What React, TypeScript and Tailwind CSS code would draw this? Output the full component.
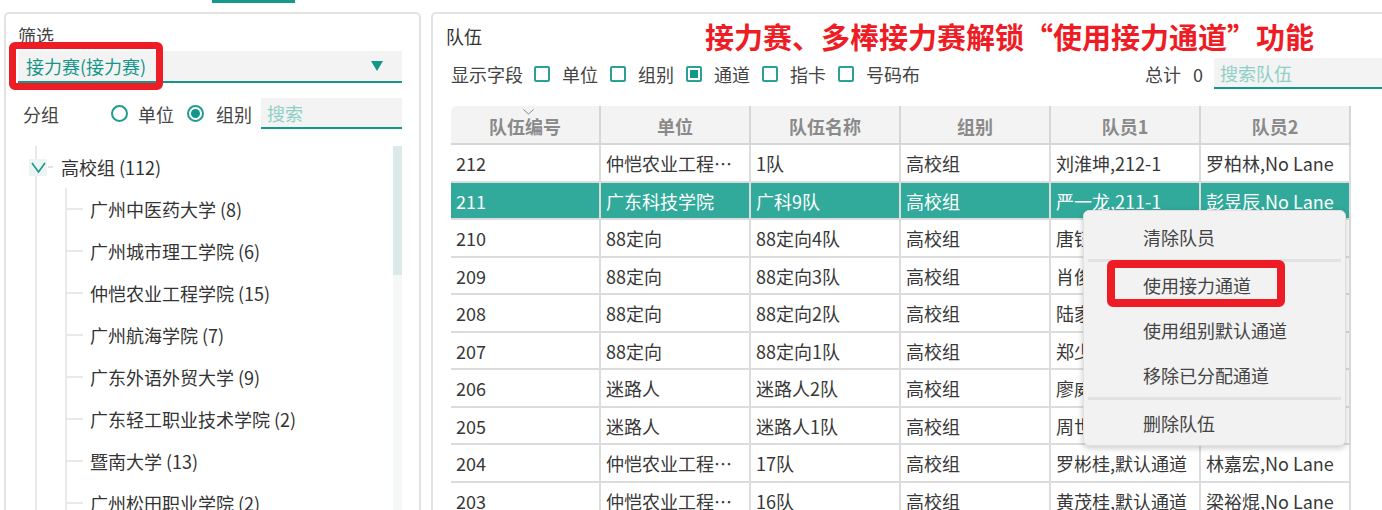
import React from "react";

type Row = { id: string; unit: string; name: string; group: string; m1: string; m2: string; sel?: boolean };

const rows: Row[] = [
  { id: "212", unit: "仲恺农业工程…", name: "1队", group: "高校组", m1: "刘淮坤,212-1", m2: "罗柏林,No Lane" },
  { id: "211", unit: "广东科技学院", name: "广科9队", group: "高校组", m1: "严一龙,211-1", m2: "彭昱辰,No Lane", sel: true },
  { id: "210", unit: "88定向", name: "88定向4队", group: "高校组", m1: "唐钰,210-1", m2: "唐晓,No Lane" },
  { id: "209", unit: "88定向", name: "88定向3队", group: "高校组", m1: "肖俊,209-1", m2: "肖涛,No Lane" },
  { id: "208", unit: "88定向", name: "88定向2队", group: "高校组", m1: "陆家豪,208-1", m2: "陆明,No Lane" },
  { id: "207", unit: "88定向", name: "88定向1队", group: "高校组", m1: "郑少,207-1", m2: "郑辉,No Lane" },
  { id: "206", unit: "迷路人", name: "迷路人2队", group: "高校组", m1: "廖威,206-1", m2: "廖斌,No Lane" },
  { id: "205", unit: "迷路人", name: "迷路人1队", group: "高校组", m1: "周世,205-1", m2: "周强,No Lane" },
  { id: "204", unit: "仲恺农业工程…", name: "17队", group: "高校组", m1: "罗彬桂,默认通道", m2: "林嘉宏,No Lane" },
  { id: "203", unit: "仲恺农业工程…", name: "16队", group: "高校组", m1: "黄茂桂,默认通道", m2: "梁裕焜,No Lane" },
];

const tree = [
  "广州中医药大学 (8)",
  "广州城市理工学院 (6)",
  "仲恺农业工程学院 (15)",
  "广州航海学院 (7)",
  "广东外语外贸大学 (9)",
  "广东轻工职业技术学院 (2)",
  "暨南大学 (13)",
  "广州松田职业学院 (2)",
];

const headers = ["队伍编号", "单位", "队伍名称", "组别", "队员1", "队员2"];

function Checkbox({ checked }: { checked?: boolean }) {
  return (
    <div className="ml-[12px] w-[16px] h-[16px] border-2 border-[#2aa192] rounded-[2px] flex items-center justify-center shrink-0">
      {checked && <div className="w-[8px] h-[8px] bg-[#13978a]" />}
    </div>
  );
}

function Radio({ checked, className }: { checked?: boolean; className: string }) {
  return (
    <div className={`w-[17px] h-[17px] rounded-full border-2 border-[#1f9d8f] flex items-center justify-center shrink-0 ${className}`}>
      {checked && <div className="w-[9px] h-[9px] rounded-full bg-[#13978a]" />}
    </div>
  );
}

export default function App() {
  return (
    <div className="relative w-[1382px] h-[510px] overflow-hidden bg-white font-['Noto_Sans_CJK_SC',sans-serif] text-[#333] text-[18px]">
      <div className="h-[12px]">
        <div className="ml-[212px] w-[83px] h-[3px] bg-[#139a8b]" />
      </div>
      <div className="flex items-start gap-[10px]">
        {/* Left panel */}
        <div className="ml-[4px] w-[417px] h-[520px] shrink-0 border-2 border-[#e3e3e3] rounded-[5px] pl-[12px] pr-[17px] pt-[9px]">
          <div className="leading-[24px] text-[#444]">筛选</div>
          <div className="mt-[4px] h-[32px] bg-[#f3f3f3] border-b-2 border-[#13978a] flex items-center justify-between pl-[8px] pr-[19px]">
            <span className="text-[#13978a] leading-none">接力赛(接力赛)</span>
            <svg width="12" height="10" viewBox="0 0 12 10">
              <polygon points="0,0 12,0 6,10" fill="#13978a" />
            </svg>
          </div>
          <div className="mt-[15px] h-[31px] flex items-center">
            <span className="ml-[5px] text-[#444] leading-none">分组</span>
            <Radio className="ml-[52px]" />
            <span className="ml-[10px] text-[#444] leading-none">单位</span>
            <Radio className="ml-[13px]" checked />
            <span className="ml-[12px] text-[#444] leading-none">组别</span>
            <div className="ml-[9px] flex-1 h-[31px] bg-[#f3f3f3] border-b-2 border-[#13978a] flex items-center pl-[6px]">
              <span className="text-[#8fd0c6] leading-none">搜索</span>
            </div>
          </div>
          <div className="mt-[17px] flex">
            <div className="ml-[17px] flex-1 border-l-2 border-[#e9e9e9] h-[380px]">
              <div className="h-[42px] flex items-center">
                <div className="-ml-[8px] w-[18px] h-[17px] bg-[#eef3f3] flex items-center justify-center">
                  <svg width="15" height="11" viewBox="0 0 15 11">
                    <polyline points="1,1 7.5,10 14,1" fill="none" stroke="#1a9a8c" strokeWidth="1.6" />
                  </svg>
                </div>
                <div className="ml-[1px] w-[5px] h-[2px] bg-[#e4e4e4]" />
                <span className="ml-[8px] leading-none text-[#333]">高校组 (112)</span>
              </div>
              <div className="ml-[28px] border-l-2 border-[#e9e9e9]">
                {tree.map((t) => (
                  <div key={t} className="h-[42px] flex items-center">
                    <div className="w-[16px] h-[2px] bg-[#e9e9e9]" />
                    <span className="ml-[7px] leading-none whitespace-nowrap text-[#333]">{t}</span>
                  </div>
                ))}
              </div>
            </div>
            <div className="w-[9px] h-[380px] bg-[#f6f8f8] flex flex-col">
              <div className="h-[129px] bg-[#dbe9e8]" />
            </div>
          </div>
        </div>

        {/* Right panel */}
        <div className="w-[1000px] h-[520px] shrink-0 border-2 border-[#e3e3e3] rounded-[5px] pl-[13px] pt-[4px]">
          <div className="h-[36px] flex items-center">
            <span className="leading-none text-[#333]">队伍</span>
            <span className="ml-[223px] text-[29px] font-bold leading-none text-[#ee1d25] whitespace-nowrap">
              接力赛、多棒接力赛解锁“使用接力通道”功能
            </span>
          </div>
          <div className="mt-[4px] ml-[5px] w-[963px] h-[31px] flex items-center text-[#444]">
            <span className="leading-none">显示字段</span>
            <div className="ml-[-1px]" />
            <Checkbox />
            <span className="ml-[12px] leading-none">单位</span>
            <Checkbox />
            <span className="ml-[12px] leading-none">组别</span>
            <Checkbox checked />
            <span className="ml-[12px] leading-none">通道</span>
            <Checkbox />
            <span className="ml-[12px] leading-none">指卡</span>
            <Checkbox />
            <span className="ml-[12px] leading-none">号码布</span>
            <div className="ml-auto flex items-center h-[31px]">
              <span className="leading-none">总计</span>
              <span className="ml-[12px] leading-none">0</span>
              <div className="ml-[11px] w-[200px] h-[31px] bg-[#f3f3f3] border-b-2 border-[#13978a] flex items-center pl-[6px]">
                <span className="text-[#8fd0c6] leading-none">搜索队伍</span>
              </div>
            </div>
          </div>
          <div className="mt-[17px] ml-[5px] w-[900px] grid grid-cols-[repeat(6,150px)]">
            {headers.map((h, i) => (
              <div
                key={h}
                className={`relative h-[39px] bg-[#f3f3f3] border-r-2 border-b-2 border-[#d6d6d6] flex items-center justify-center pt-[3px] font-bold text-[#8a8a8a] leading-none ${i === 0 ? "rounded-tl-[6px]" : ""}`}
              >
                {i === 0 && (
                  <svg className="absolute top-[3px] left-[72px]" width="11" height="6" viewBox="0 0 11 6">
                    <polyline points="0.5,0.5 5.5,5 10.5,0.5" fill="none" stroke="#888" strokeWidth="1" />
                  </svg>
                )}
                {h}
              </div>
            ))}
            {rows.map((r) =>
              [r.id, r.unit, r.name, r.group, r.m1, r.m2].map((c, j) => (
                <div
                  key={r.id + "-" + j}
                  className={`h-[37.5px] border-r-2 border-b-2 border-[#dcdcdc] flex items-center pl-[5px] pt-[1px] whitespace-nowrap overflow-hidden leading-none ${
                    r.sel ? "bg-[#31aa9b] text-white" : "text-[#383838]"
                  }`}
                >
                  {c}
                </div>
              ))
            )}
          </div>
        </div>
      </div>

      {/* Annotation box around select */}
      <div className="absolute left-[9px] top-[42px] w-[154px] h-[48px] border-[7px] border-[#ee1d25] rounded-[6px]" />

      {/* Context menu */}
      <div className="absolute left-[1083px] top-[210px] w-[263px] h-[236px] bg-[#f2f2f2] border border-[#e0e0e0] rounded-[6px] shadow-[0_2px_6px_rgba(0,0,0,0.22)] pt-[3px] text-[#444]">
        <div className="h-[45px] flex items-center pl-[59px] leading-none">清除队员</div>
        <div className="mx-[4px] h-[3px] bg-[#e2e2e2]" />
        <div className="h-[45px] flex items-center pl-[59px] leading-none">使用接力通道</div>
        <div className="h-[45px] flex items-center pl-[59px] leading-none">使用组别默认通道</div>
        <div className="h-[45px] flex items-center pl-[59px] leading-none">移除已分配通道</div>
        <div className="mx-[4px] h-[3px] bg-[#e2e2e2]" />
        <div className="h-[46px] flex items-center pl-[59px] leading-none">删除队伍</div>
      </div>

      {/* Annotation box in menu */}
      <div className="absolute left-[1107px] top-[260px] w-[178px] h-[47px] border-[8px] border-[#ee1d25] rounded-[6px]" />
    </div>
  );
}
